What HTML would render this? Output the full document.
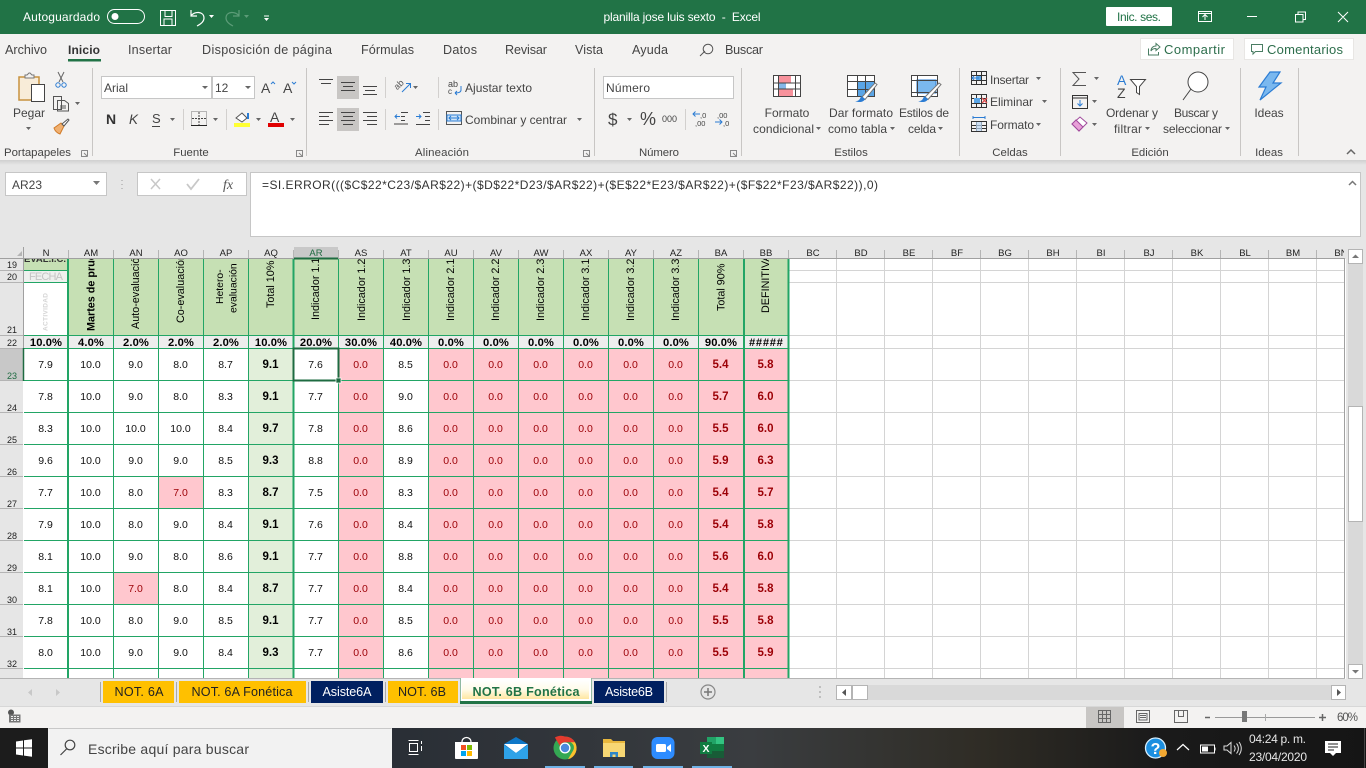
<!DOCTYPE html>
<html lang="es"><head><meta charset="utf-8"><title>planilla jose luis sexto - Excel</title>
<style>
html,body{margin:0;padding:0;width:1366px;height:768px;overflow:hidden;background:#e6e6e6}
svg{position:absolute;left:0;top:0;display:block}
svg text{font-family:"Liberation Sans",Arial,sans-serif;white-space:pre}
.l{font-size:11.4px;fill:#444}.m{text-anchor:middle}
.r{font-size:12px;fill:#444}.h{font-size:9.5px;fill:#222;text-anchor:middle}
.n{font-size:9px;fill:#222;text-anchor:middle}
.v{font-size:10.8px;fill:#000}
.p{font-size:11.2px;font-weight:bold;fill:#000;text-anchor:middle;letter-spacing:.1px}
.tb{font-size:12.6px;fill:#222;text-anchor:middle}
#w{position:absolute;left:23px;top:348px;width:765px;height:330px;overflow:hidden}
table{border-collapse:separate;border-spacing:0;table-layout:fixed;width:765px;font:10.5px "Liberation Sans",Arial,sans-serif;color:#111}
td{width:45px;height:32px;box-sizing:border-box;padding:1px 0 0;text-align:center;background:#fff}
tr.e td{height:10px;padding:0}
td:nth-child(n+8){background:#ffc7ce;color:#9c0006}
td:nth-child(9){background:#fff;color:#111}
td:nth-child(6){background:#e2efda;font-weight:bold;font-size:11.5px;color:#000}
td:nth-child(n+16){font-weight:bold;font-size:11.5px}
td.q{background:#ffc7ce;color:#9c0006}
</style></head><body>
<svg width="1366" height="768" viewBox="0 0 1366 768" fill="none">
<defs>
<linearGradient id="sh" x1="0" y1="0" x2="0" y2="1"><stop offset="0" stop-color="#cfcfcf"/><stop offset="1" stop-color="#e6e6e6"/></linearGradient>
<linearGradient id="tk" x1="0" y1="0" x2="1" y2="0"><stop offset="0" stop-color="#20252b"/><stop offset=".3" stop-color="#2a2f36"/><stop offset=".55" stop-color="#3a3d40"/><stop offset=".72" stop-color="#2f2c25"/><stop offset=".85" stop-color="#1a1a1a"/><stop offset="1" stop-color="#151515"/></linearGradient>
<linearGradient id="at" x1="0" y1="0" x2="0" y2="1"><stop offset="0" stop-color="#fff"/><stop offset=".5" stop-color="#fffbe9"/><stop offset="1" stop-color="#ffe6a0"/></linearGradient>
</defs>
<!-- base areas -->
<rect width="1366" height="34" fill="#217346"/>
<rect y="34" width="1366" height="126" fill="#f3f2f1"/>
<rect y="160" width="1366" height="5" fill="url(#sh)"/>
<rect y="165" width="1366" height="82" fill="#e6e6e6"/>
<!-- title bar -->
<text x="23" y="21" font-size="12" fill="#fff" textLength="77">Autoguardado</text>
<rect x="107.5" y="9.5" width="37" height="14" rx="7" stroke="#fff"/><circle cx="115" cy="16.5" r="3.5" fill="#fff"/>
<path d="M160.5 10.500h15v15h-15zM165 10.500v6h7v-6M164 25.500v-6.500h8v6.500" stroke="#fff"/>
<path d="M191 10v6h6M191 16c3-5 13-5 13 2 0 3-3 6-7 8" stroke="#fff" stroke-width="1.200"/>
<path d="M209 15h5l-2.500 3zM264 15.500h5v1h-5zM264 18h5l-2.500 3z" fill="#fff"/>
<path d="M239 10v6h-6M239 16c-3-5-13-5-13 2 0 3 3 6 7 8" stroke="#5c9c78" stroke-width="1.200"/><path d="M244 15h5l-2.500 3z" fill="#5c9c78"/>
<text x="682" y="21" class="m" font-size="12" fill="#fff" textLength="157">planilla jose luis sexto  -  Excel</text>
<rect x="1106" y="7" width="66" height="19" fill="#fff" rx="1"/><text x="1139" y="21" class="m" font-size="12" fill="#217346" textLength="44">Inic. ses.</text>
<path d="M1198.500 11.500h13v10h-13zM1198.500 13.500h13M1205 20v-5M1202.500 17l2.500-2.500 2.500 2.500" stroke="#fff"/>
<path d="M1247 16.500h10M1295.500 14.500h7.500v7.500h-7.500zM1298 14.500v-2.500h7.500v7.500h-2.500M1338 12l10 10M1348 12l-10 10" stroke="#fff"/>
<!-- tabs -->
<g font-size="12.6" fill="#444">
<text x="5" y="54" textLength="42">Archivo</text>
<text x="68" y="54" textLength="32" font-weight="bold" fill="#333" font-size="12">Inicio</text>
<text x="128" y="54" textLength="44">Insertar</text>
<text x="202" y="54" textLength="130">Disposición de página</text>
<text x="361" y="54" textLength="53">Fórmulas</text>
<text x="443" y="54" textLength="34">Datos</text>
<text x="505" y="54" textLength="42">Revisar</text>
<text x="575" y="54" textLength="28">Vista</text>
<text x="632" y="54" textLength="36">Ayuda</text>
<text x="725" y="54" textLength="38">Buscar</text>
</g>
<rect x="68" y="59" width="33" height="2.500" fill="#217346"/>
<path d="M700 56l5-5" stroke="#555"/><circle cx="708" cy="49" r="4.800" stroke="#555"/>
<rect x="1140.500" y="38.500" width="93" height="21" fill="#fff" stroke="#e8e6e4"/>
<rect x="1244.500" y="38.500" width="109" height="21" fill="#fff" stroke="#e8e6e4"/>
<path d="M1148.500 48.500v6.500h10v-3M1151 51c0-3 2-5 5-5v-2.500l4 3.500-4 3.500v-2c-2 0-4 .5-5 2.500z" stroke="#4a7d63"/>
<path d="M1251.500 44.500h11v7h-7l-2.500 2.500v-2.500h-1.500z" stroke="#4a7d63"/>
<text x="1164" y="54" font-size="13" fill="#2d6e4c" textLength="61">Compartir</text>
<text x="1267" y="54" font-size="13" fill="#2d6e4c" textLength="76">Comentarios</text>
<!-- group separators -->
<path d="M92.500 68v88M306.500 68v88M594.500 68v88M741.500 68v88M959.500 68v88M1060.500 68v88M1240.500 68v88M1298.500 68v88" stroke="#c8c6c4"/>
<path d="M183.500 109v21M226.500 109v21M385.500 77v21M385.500 109v21M438.500 77v21M438.500 109v21M685.500 109v21" stroke="#d2d0ce"/>
<!-- labels -->
<text x="4" y="156" class="l" textLength="67">Portapapeles</text>
<text x="191" y="156" class="l m">Fuente</text>
<text x="415" y="156" class="l" textLength="54">Alineación</text>
<text x="639" y="156" class="l" textLength="40">Número</text>
<text x="851" y="156" class="l m">Estilos</text>
<text x="1010" y="156" class="l m">Celdas</text>
<text x="1150" y="156" class="l m">Edición</text>
<text x="1269" y="156" class="l m">Ideas</text>
<g stroke="#888"><path d="M81.500 150.500h6v6M81.500 150.500v6h6M84 153l3 3M296.500 150.500h6v6h-6zM299 153l3 3M583.500 150.500h6v6h-6zM586 153l3 3M730.500 150.500h6v6h-6zM733 153l3 3"/></g>
<path d="M1347 154l4-4 4 4" stroke="#666" stroke-width="1.500"/>
<!-- clipboard -->
<path d="M19 77h20v23H19z" fill="#f8ecd8" stroke="#c8923f" stroke-width="1.500"/>
<path d="M25 77v-2h2l2-2h1l2 2h2v3h-9z" fill="#f3f2f1" stroke="#777"/>
<rect x="31.500" y="84.500" width="13" height="17" fill="#fff" stroke="#444"/>
<text x="29" y="117" class="r m" font-size="12">Pegar</text>
<path d="M26 127h5l-2.500 3zM75 102h5l-2.500 3z" fill="#666"/>
<path d="M58 72l5 10M64 72l-5 10" stroke="#666"/><circle cx="58" cy="85" r="2.200" stroke="#2b7cd3"/><circle cx="64" cy="85" r="2.200" stroke="#2b7cd3"/>
<path d="M53.500 96.500h8v13h-8zM57.500 100.500h7l4 3v7.500h-11z" stroke="#555" fill="#f3f2f1"/><path d="M60 106h6M60 108h6" stroke="#555"/>
<path d="M54 128l7-5 3 3-4 8c-3-1-5-3-6-6z" fill="#f0b070" stroke="#d07a28"/><path d="M62 124l6-5 1 1-5 6z" fill="#fff" stroke="#555"/>
<!-- font controls -->
<rect x="101.500" y="76.500" width="110" height="22" fill="#fff" stroke="#c6c6c6"/>
<rect x="212.500" y="76.500" width="42" height="22" fill="#fff" stroke="#c6c6c6"/>
<text x="104" y="92" class="r">Arial</text><text x="215" y="92" class="r">12</text>
<path d="M202 86h6l-3 3zM245 86h6l-3 3zM723 86h6l-3 3z" fill="#666"/>
<text x="261" y="93" font-size="14" fill="#444">A</text><text x="283" y="93" font-size="14" fill="#444">A</text>
<path d="M271 84l2-2 2 2" stroke="#2b7cd3"/><path d="M292 82l2 2 2-2" stroke="#2b7cd3"/>
<text x="106" y="124" font-size="14" font-weight="bold" fill="#333">N</text>
<text x="129" y="124" font-size="13.500" font-style="italic" fill="#444">K</text>
<text x="152" y="123" font-size="13" fill="#444">S</text><path d="M152 126.500h8" stroke="#444"/>
<path d="M170 118h5l-2.500 3zM213 118h5l-2.500 3zM256 118h5l-2.500 3zM290 118h5l-2.500 3zM413 86h5l-2.500 3zM577 118h5l-2.500 3z" fill="#666"/>
<path d="M191.500 111.500h15v14h-15z" stroke="#777" stroke-dasharray="1 1"/><path d="M199 112v13M192 118.500h14" stroke="#444" stroke-dasharray="2 1"/><path d="M191 125.500h16" stroke="#222"/>
<path d="M236 118l6-5 5 5-5 4z" fill="#fff" stroke="#555"/><path d="M248 113v6" stroke="#2b7cd3" stroke-width="2"/>
<rect x="234" y="123" width="16" height="4" fill="#ffff33"/>
<text x="270" y="122" font-size="14" fill="#444">A</text><rect x="268" y="123" width="16" height="4" fill="#e00000"/>
<!-- alignment -->
<rect x="337" y="76" width="22" height="23" fill="#c8c6c4"/><rect x="337" y="108" width="22" height="23" fill="#c8c6c4"/>
<path d="M319 79.500h14M321 83.500h10M363 86.500h14M365 90.500h10M363 94.500h14M341 82.500h14M343 86.500h10M341 90.500h14" stroke="#444"/>
<path d="M319 112.500h14M319 116.500h10M319 120.500h14M319 124.500h10M341 112.500h14M343 116.500h10M341 120.500h14M343 124.500h10M363 112.500h14M367 116.500h10M363 120.500h14M367 124.500h10" stroke="#444"/>
<text x="393" y="88" font-size="9" fill="#555" transform="rotate(-45 398 84)">ab</text>
<path d="M402 92l8-8M406 83.500h4.500v4.500" stroke="#2b7cd3"/>
<path d="M401 113.500h7M401 117.500h4M401 121.500h4M394 125h14" stroke="#444" transform="translate(0 -1)"/><path d="M395 116.500h5M397 114.500l-2 2 2 2" stroke="#2b7cd3"/>
<path d="M423 112.500h7M425 116.500h5M425 120.500h5M416 124.500h14" stroke="#444"/><path d="M416 116.500h5M419 114.500l2 2-2 2" stroke="#2b7cd3"/>
<text x="448" y="87" font-size="9" fill="#444">ab</text><text x="448" y="94" font-size="8" fill="#444">c</text>
<path d="M461 86v4c0 3-5 3-6 3M455 93l2-2M455 93l2 2" stroke="#2b7cd3"/>
<text x="465" y="92" class="r" textLength="67">Ajustar texto</text>
<rect x="446.500" y="111.500" width="15" height="13" fill="#f3f2f1" stroke="#555"/><rect x="447" y="115" width="14" height="6" fill="#cfe5f8" stroke="#2b7cd3"/><path d="M449 118h10M451 116l-2 2 2 2M457 116l2 2-2 2" stroke="#2b7cd3"/>
<text x="465" y="124" class="r" textLength="102">Combinar y centrar</text>
<!-- number -->
<rect x="603.500" y="76.500" width="130" height="22" fill="#fff" stroke="#c6c6c6"/>
<text x="606" y="92" class="r" textLength="44">Número</text>
<text x="608" y="125" font-size="17" fill="#444">$</text><path d="M627 118h5l-2.500 3z" fill="#666"/>
<text x="640" y="125" font-size="18" fill="#444">%</text>
<text x="662" y="122" font-size="9" fill="#444">000</text>
<path d="M693 114h7M695.500 111.500l-2.500 2.500 2.500 2.500" stroke="#2b7cd3"/><text x="700" y="118" font-size="7.500" fill="#444">,0</text><text x="695" y="126" font-size="7.500" fill="#444">,00</text>
<path d="M715 122h7M719.500 119.500l2.500 2.500-2.500 2.500" stroke="#2b7cd3"/><text x="717" y="118" font-size="7.500" fill="#444">,00</text><text x="723" y="126" font-size="7.500" fill="#444">,0</text>
<!-- estilos -->
<rect x="773" y="75" width="28" height="22" fill="#fff"/>
<rect x="778" y="75" width="13" height="8" fill="#f7929c"/><rect x="778" y="83" width="8" height="6" fill="#85b7e8"/><rect x="778" y="89" width="15" height="8" fill="#f7929c"/>
<path d="M773.500 75.500h27v21h-27zM773.500 83h27M773.500 89h27M778.500 75.500v21M795.500 75.500v21" stroke="#444"/>
<rect x="847" y="75" width="28" height="22" fill="#fff"/>
<rect x="857" y="81" width="18" height="16" fill="#5aa5e6"/>
<path d="M847.500 75.500h27v21h-27zM847.500 81.500h27M847.500 89.500h27M857.500 75.500v21M865.500 75.500v21" stroke="#444"/>
<rect x="911" y="75" width="27" height="22" fill="#fff"/>
<rect x="917" y="80" width="19" height="13" fill="#7ab8ef" stroke="#2b7cd3"/>
<path d="M911.500 75.500h26v21h-26zM911.500 80.500h26M911.500 92.500h26M917.500 75.500v21" stroke="#444"/>
<path d="M862 97l13-14 2 1.500-12 15z" fill="#fff" stroke="#777"/><path d="M855 101c3 .5 5-1 6-5l4 3c-1 3-6 4-10 2z" fill="#2b7cd3"/>
<path d="M925 97l14-14 2 1.500-13 15z" fill="#fff" stroke="#777"/><path d="M918 101c3 .5 5-1 6-5l4 3c-1 3-6 4-10 2z" fill="#2b7cd3"/>
<text x="787" y="117" class="r m">Formato</text><text x="753" y="133" class="r" textLength="61">condicional</text>
<text x="861" y="117" class="r m" textLength="64">Dar formato</text><text x="828" y="133" class="r" textLength="59">como tabla</text>
<text x="924" y="117" class="r m" textLength="50">Estilos de</text><text x="908" y="133" class="r" textLength="28">celda</text>
<text x="1132" y="117" class="r m" textLength="52">Ordenar y</text><text x="1114" y="133" class="r" textLength="28">filtrar</text>
<text x="1196" y="117" class="r m" textLength="44">Buscar y</text><text x="1163" y="133" class="r" textLength="59">seleccionar</text>
<text x="1269" y="117" class="r m">Ideas</text>
<text x="990" y="84" class="r" textLength="39">Insertar</text>
<text x="990" y="106" class="r" textLength="43">Eliminar</text>
<text x="990" y="129" class="r" textLength="44">Formato</text>
<path d="M816 127h5l-2.500 3zM890 127h5l-2.500 3zM938 127h5l-2.500 3zM1036 77h5l-2.500 3zM1042 100h5l-2.500 3zM1036 123h5l-2.500 3zM1094 77h5l-2.500 3zM1092 100h5l-2.500 3zM1092 123h5l-2.500 3zM1145 127h5l-2.500 3zM1225 127h5l-2.500 3z" fill="#666"/>
<!-- celdas -->
<path d="M971.500 71.500h15v13h-15zM971.500 75.500h15M971.500 80.500h15M981.500 71.500v13M976.500 71.500v13" stroke="#333"/><rect x="976" y="76" width="5" height="4" fill="#5aa5e6"/><path d="M972 78h7M974 76l-2 2 2 2" stroke="#2b7cd3" fill="none"/>
<path d="M971.500 94.500h15v13h-15zM971.500 98.500h15M971.500 103.500h15M976.500 94.500v13M981.500 94.500v13" stroke="#333"/><rect x="974" y="98" width="6" height="5" fill="#5aa5e6"/><path d="M982 98l5 5M987 98l-5 5" stroke="#e05050" stroke-width="1.300"/>
<path d="M971.500 121.500h15v10h-15zM971.500 125.500h15M971.500 128.500h15M976.500 121.500v10M981.500 121.500v10" stroke="#333"/><rect x="976" y="122" width="6" height="9" fill="#bcd9f5" opacity=".7"/><path d="M973 117.500h12M973 116v3M985 116v3" stroke="#2b7cd3"/>
<!-- edicion -->
<path d="M1086 72.500h-13l6 6.500-6 6.500h13" stroke="#555"/>
<path d="M1072.500 95.500h15v13h-15zM1072.500 98h15" stroke="#333"/><path d="M1080 100v6M1077.500 103.500l2.500 2.500 2.500-2.500" stroke="#2b7cd3"/>
<path d="M1072 124l8-7 7 6-8 8z" fill="#fff" stroke="#a04a9c"/><path d="M1072 124l4-4 7 7-4 4z" fill="#e8a0d8" stroke="#a04a9c"/>
<text x="1117" y="85" font-size="14" fill="#2b7cd3">A</text><text x="1117" y="98" font-size="14" fill="#444">Z</text>
<path d="M1130.500 79.500h15l-6 7v8l-3-2v-6z" stroke="#444" fill="#fff"/>
<circle cx="1198" cy="82" r="10" fill="#fff" stroke="#444"/><path d="M1191 89l-8 11" stroke="#444"/>
<path d="M1270 72l-11 15h7l-6 13 21-17h-8l7-11z" fill="#7ab8ef" stroke="#2b7cd3" stroke-width="1.200"/>
<!-- formula bar -->
<rect x="5.500" y="172.500" width="101" height="23" fill="#fff" stroke="#c6c6c6"/>
<text x="12" y="189" font-size="12" fill="#444">AR23</text><path d="M93 181h7l-3.500 4z" fill="#777"/>
<path d="M122 180v1M122 184v1M122 188v1" stroke="#999"/>
<rect x="137.500" y="172.500" width="109" height="23" fill="#fff" stroke="#c6c6c6"/>
<path d="M151 179l9 10M160 179l-9 10" stroke="#c8c8c8" stroke-width="1.500"/>
<path d="M187 184l4 5 8-10" stroke="#c8c8c8" stroke-width="1.800"/>
<text x="223" y="189" font-size="14" font-style="italic" fill="#555" style="font-family:'Liberation Serif',serif">fx</text>
<rect x="250.500" y="172.500" width="1110" height="64" fill="#fff" stroke="#c6c6c6"/>
<text x="262" y="189" font-size="12" fill="#333" textLength="616">=SI.ERROR((($C$22*C23/$AR$22)+($D$22*D23/$AR$22)+($E$22*E23/$AR$22)+($F$22*F23/$AR$22)),0)</text>
<path d="M1349 185l3.500-3.500 3.500 3.500" stroke="#777" stroke-width="1.500"/>
<!-- sheet background -->
<rect y="259" width="1346" height="420" fill="#fff"/>
<rect x="0" y="247" width="1346" height="11" fill="#e6e6e6"/>
<rect x="0" y="258" width="23" height="421" fill="#e6e6e6"/>
<rect x="294" y="247" width="44" height="11" fill="#c8c8c8"/>
<rect x="0" y="348" width="23" height="32" fill="#c8c8c8"/>
<!-- header & grid, right part -->
<path d="M1344 258.500H0M1344.500 258v421M23.500 247v431" stroke="#a0a0a0"/>
<g stroke="#d4d4d4">
<path d="M789 270.500h555M789 282.500h555M789 335.500h555M789 348.500h555M789 380.500h555M789 412.500h555M789 444.500h555M789 476.500h555M789 508.500h555M789 540.500h555M789 572.500h555M789 604.500h555M789 636.500h555M789 668.500h555"/>
<path d="M836.500 259v419M884.500 259v419M932.500 259v419M980.500 259v419M1028.500 259v419M1076.500 259v419M1124.500 259v419M1172.500 259v419M1220.500 259v419M1268.500 259v419M1316.500 259v419"/>
</g>
<path d="M68.500 250v8M113.500 250v8M158.500 250v8M203.500 250v8M248.500 250v8M293.500 250v8M338.500 250v8M383.500 250v8M428.500 250v8M473.500 250v8M518.500 250v8M563.500 250v8M608.500 250v8M653.500 250v8M698.500 250v8M743.500 250v8M788.500 250v8M836.500 250v8M884.500 250v8M932.500 250v8M980.500 250v8M1028.500 250v8M1076.500 250v8M1124.500 250v8M1172.500 250v8M1220.500 250v8M1268.500 250v8M1316.500 250v8" stroke="#b4b4b4"/>
<path d="M0 270.500h23M0 282.500h23M0 335.500h23M0 348.500h23M0 380.500h23M0 412.500h23M0 444.500h23M0 476.500h23M0 508.500h23M0 540.500h23M0 572.500h23M0 604.500h23M0 636.500h23M0 668.500h23M0 678.500h1345" stroke="#b4b4b4"/>
<path d="M17 256h5v-5z" fill="#b4b4b4"/>
<!-- col letters -->
<text x="46" y="256" class="h">N</text><text x="91" y="256" class="h">AM</text><text x="136" y="256" class="h">AN</text><text x="181" y="256" class="h">AO</text><text x="226" y="256" class="h">AP</text><text x="271" y="256" class="h">AQ</text><text x="316" y="256" class="h" style="fill:#1e6b41">AR</text><text x="361" y="256" class="h">AS</text><text x="406" y="256" class="h">AT</text><text x="451" y="256" class="h">AU</text><text x="496" y="256" class="h">AV</text><text x="541" y="256" class="h">AW</text><text x="586" y="256" class="h">AX</text><text x="631" y="256" class="h">AY</text><text x="676" y="256" class="h">AZ</text><text x="721" y="256" class="h">BA</text><text x="766" y="256" class="h">BB</text><text x="813" y="256" class="h">BC</text><text x="861" y="256" class="h">BD</text><text x="909" y="256" class="h">BE</text><text x="957" y="256" class="h">BF</text><text x="1005" y="256" class="h">BG</text><text x="1053" y="256" class="h">BH</text><text x="1101" y="256" class="h">BI</text><text x="1149" y="256" class="h">BJ</text><text x="1197" y="256" class="h">BK</text><text x="1245" y="256" class="h">BL</text><text x="1293" y="256" class="h">BM</text>
<svg x="1317" y="247" width="27" height="11"><text x="24" y="9" class="h">BN</text></svg>
<!-- row numbers -->
<text x="12" y="268" class="n">19</text><text x="12" y="280" class="n">20</text><text x="12" y="333" class="n">21</text><text x="12" y="346" class="n">22</text><text x="12" y="379" class="n" style="fill:#1e6b41">23</text><text x="12" y="411" class="n">24</text><text x="12" y="443" class="n">25</text><text x="12" y="475" class="n">26</text><text x="12" y="507" class="n">27</text><text x="12" y="539" class="n">28</text><text x="12" y="571" class="n">29</text><text x="12" y="603" class="n">30</text><text x="12" y="635" class="n">31</text><text x="12" y="667" class="n">32</text>
<!-- header cells -->
<rect x="24" y="259" width="44" height="11" fill="#c6e0b4"/>
<rect x="24" y="271" width="44" height="11" fill="#eef0ee"/>
<rect x="69" y="259" width="719" height="76" fill="#c6e0b4"/>
<rect x="24" y="336" width="764" height="12" fill="#ededed"/>
<!-- sheet tabs band -->
<rect y="679" width="1366" height="28" fill="#e6e6e6"/>
<rect y="706.500" width="1366" height="1" fill="#c8c8c8"/>
<rect y="707" width="1366" height="21" fill="#f3f2f1"/>
<path d="M32 689l-4 3.500 4 3.500zM56 689l4 3.500-4 3.500z" fill="#c8c8c8"/>
<path d="M100.500 682v20M176.500 682v20M308.500 682v20M385.500 682v20M666.500 682v20" stroke="#a8a8a8"/>
<rect x="103" y="681" width="71" height="22" fill="#ffc000"/>
<rect x="179" y="681" width="127" height="22" fill="#ffc000"/>
<rect x="311" y="681" width="72" height="22" fill="#002060"/>
<rect x="388" y="681" width="70" height="22" fill="#ffc000"/>
<rect x="460" y="678" width="132" height="26" fill="#217346"/><rect x="460.500" y="678" width="131" height="23" fill="#fff"/>
<rect x="462" y="680" width="127" height="19" fill="url(#at)"/>
<rect x="594" y="681" width="70" height="22" fill="#002060"/>
<text x="139" y="696" class="tb" textLength="49">NOT. 6A</text>
<text x="242" y="696" class="tb" textLength="101">NOT. 6A Fonética</text>
<text x="347" y="696" class="tb" style="fill:#fff" textLength="49">Asiste6A</text>
<text x="422" y="696" class="tb" textLength="48">NOT. 6B</text>
<text x="526" y="696" class="tb" style="fill:#217346;font-weight:bold" textLength="107">NOT. 6B Fonética</text>
<text x="629" y="696" class="tb" style="fill:#fff" textLength="48">Asiste6B</text>
<circle cx="708" cy="692" r="7" stroke="#888" stroke-width="1.200"/><path d="M704 692h8M708 688v8" stroke="#777" stroke-width="1.500"/>
<path d="M820 686v2M820 691v2M820 696v2" stroke="#aaa" stroke-width="1.300"/>
<rect x="852" y="685" width="493" height="15" fill="#d9d9d9"/>
<rect x="836.500" y="685.500" width="15" height="14" fill="#fff" stroke="#b4b4b4"/><path d="M846 689l-4 3.500 4 3.500z" fill="#555"/>
<rect x="852.500" y="685.500" width="15" height="14" fill="#fff" stroke="#b4b4b4"/>
<rect x="1331.500" y="685.500" width="14" height="14" fill="#fff" stroke="#b4b4b4"/><path d="M1337 689l4 3.500-4 3.500z" fill="#555"/>
<!-- vertical scrollbar -->
<rect x="1348" y="249" width="15" height="429" fill="#d9d9d9"/>
<rect x="1348.500" y="249.500" width="14" height="14" fill="#fff" stroke="#b4b4b4"/><path d="M1352 258l3.500-3.500 3.500 3.500z" fill="#777"/>
<rect x="1348.500" y="406.500" width="14" height="115" fill="#fff" stroke="#b4b4b4"/>
<rect x="1348.500" y="664.500" width="14" height="14" fill="#fff" stroke="#b4b4b4"/><path d="M1352 670l3.500 3.500 3.500-3.500z" fill="#777"/>
<!-- status bar -->
<circle cx="11" cy="712.500" r="3" fill="#555"/><path d="M9 714.500h11.500v8h-11.500z" fill="#777"/><path d="M11 716.500h8M11 718.500h8M11 720.500h8" stroke="#eee" stroke-dasharray="2 1"/>
<rect x="1086" y="707" width="38" height="21" fill="#c8c6c4"/>
<path d="M1098.500 710.500h12v12h-12zM1098.500 714.500h12M1098.500 718.500h12M1102.500 710.500v12M1106.500 710.500v12" stroke="#666"/>
<path d="M1136.500 710.500h13v12h-13zM1139 713.500h8v6.500h-8zM1140 715.500h6M1140 717.500h6" stroke="#666"/>
<path d="M1174.500 710.500h13v12h-13zM1178.500 710.500v6h5v-6" stroke="#666"/>
<path d="M1215 717.500h100" stroke="#999"/>
<path d="M1205 717.500h5M1319 717.500h7M1322.500 714v7" stroke="#666" stroke-width="1.500"/>
<path d="M1265.500 714v7" stroke="#aaa"/>
<rect x="1242" y="711" width="5" height="11" fill="#777"/>
<text x="1337" y="721" font-size="11.500" fill="#555" textLength="21">60%</text>
<!-- taskbar -->
<rect y="728" width="1366" height="40" fill="url(#tk)"/>
<rect y="728" width="48" height="40" fill="#1c1c1c"/>
<rect x="48" y="728" width="344" height="40" fill="#f2f2f2"/>
<path d="M48.500 728.500h343" stroke="#c8c8c8"/>
<path d="M16 741.500l7-1v7h-7zM24 740.300l8-1v8.200h-8zM16 748.500h7v7l-7-1zM24 748.500h8v8.300l-8-1.200z" fill="#fff"/>
<circle cx="70" cy="745" r="4.800" stroke="#444" stroke-width="1.200"/><path d="M66.500 749l-6 6" stroke="#444" stroke-width="1.200"/>
<text x="88" y="754" font-size="14" fill="#444" textLength="161">Escribe aquí para buscar</text>
<path d="M409.500 743.500h8v8h-8zM408.500 740.500h10M408.500 754.500h10M421.500 741v3M421.500 746v5" stroke="#fff"/>
<!-- store -->
<path d="M455 742h23v16c0 1-1 1-1 1h-21c-1 0-1-1-1-1z" fill="#fff"/><path d="M462 742c0-6 9-6 9 0" stroke="#fff" stroke-width="1.200"/>
<rect x="461" y="745" width="5" height="5" fill="#f25022"/><rect x="467" y="745" width="5" height="5" fill="#7fba00"/><rect x="461" y="751" width="5" height="5" fill="#00a4ef"/><rect x="467" y="751" width="5" height="5" fill="#ffb900"/>
<!-- mail -->
<path d="M504 744l12-7 12 7v15h-24z" fill="#0f78c8"/><path d="M504 744h24l-12 9z" fill="#fff"/><path d="M504 745l12 8 12-8v14h-24z" fill="#2ea2e8"/>
<!-- chrome -->
<circle cx="565" cy="748" r="11.500" fill="#34a853"/>
<path d="M565 736.500a11.500 11.500 0 0 1 10 5.800h-10a5.700 5.700 0 0 0-5.200 3.400l-4.900-8.200a11.500 11.500 0 0 1 10.100-1z" fill="#e33b2e"/>
<path d="M575 742.300a11.500 11.500 0 0 1-7 17l5-8.600a5.700 5.700 0 0 0-2.500-8.400z" fill="#fbc02d"/>
<circle cx="565" cy="748" r="5.500" fill="#fff"/><circle cx="565" cy="748" r="4.200" fill="#4a89dc"/>
<!-- folder -->
<path d="M603 739h8l2 2h12v16h-22z" fill="#e8b73d"/><path d="M603 743h22v14h-22z" fill="#f7d774"/><path d="M610 757v-5h8v5h-2.500v-2.500h-3v2.500z" fill="#2f86c6"/>
<!-- zoom -->
<rect x="651.500" y="737" width="23" height="22" rx="6" fill="#2d8cff"/><rect x="656" y="744" width="10" height="8" rx="1.500" fill="#fff"/><path d="M667 747l4-3v8l-4-3z" fill="#fff"/>
<!-- excel -->
<rect x="707" y="737" width="17" height="21" fill="#21a366"/><rect x="716" y="737" width="8" height="7" fill="#33c481"/><rect x="707" y="744" width="17" height="7" fill="#107c41"/><rect x="707" y="751" width="17" height="7" fill="#185c37"/>
<rect x="700" y="742" width="12" height="12" fill="#107c41"/>
<text x="702.500" y="752" font-size="10.500" font-weight="bold" fill="#fff">X</text>
<path d="M545 767h40M594 767h39M643 767h40M692 767h40" stroke="#6fb2e6" stroke-width="2"/>
<!-- tray -->
<circle cx="1155.500" cy="748" r="10" fill="#1b8fe0" stroke="#d8f0ff" stroke-width="1.300"/>
<text x="1155.500" y="754" class="m" font-size="16" font-weight="bold" fill="#fff">?</text>
<circle cx="1163" cy="753" r="4" fill="#f2a832"/>
<path d="M1177 750l6-5.500 6 5.500" stroke="#fff" stroke-width="1.200"/>
<path d="M1200.500 745h14v8h-14zM1215 747.500v3" stroke="#fff"/><rect x="1202" y="746.500" width="6" height="5" fill="#fff"/>
<path d="M1224 746h3l4-3.500v11l-4-3.500h-3zM1234 745.500c1.500 2 1.500 4 0 6M1236.500 743.500c2.500 3 2.500 7 0 10M1239 742c3 4 3 9 0 13" stroke="#ddd"/>
<text x="1249" y="743" font-size="12" fill="#e6e6e6" textLength="57">04:24 p. m.</text>
<text x="1249" y="761" font-size="12" fill="#e6e6e6" textLength="58">23/04/2020</text>
<path d="M1325 741h16v12h-5l-3 3-3-3h-5z" fill="#fff"/><path d="M1328 744h10M1328 747h10M1328 750h6" stroke="#222"/>
<path d="M1364.500 728v40" stroke="#444"/>
</svg>
<div id="w"><table>
<tr><td>7.9<td>10.0<td>9.0<td>8.0<td>8.7<td>9.1<td>7.6<td>0.0<td>8.5<td>0.0<td>0.0<td>0.0<td>0.0<td>0.0<td>0.0<td>5.4<td>5.8
<tr><td>7.8<td>10.0<td>9.0<td>8.0<td>8.3<td>9.1<td>7.7<td>0.0<td>9.0<td>0.0<td>0.0<td>0.0<td>0.0<td>0.0<td>0.0<td>5.7<td>6.0
<tr><td>8.3<td>10.0<td>10.0<td>10.0<td>8.4<td>9.7<td>7.8<td>0.0<td>8.6<td>0.0<td>0.0<td>0.0<td>0.0<td>0.0<td>0.0<td>5.5<td>6.0
<tr><td>9.6<td>10.0<td>9.0<td>9.0<td>8.5<td>9.3<td>8.8<td>0.0<td>8.9<td>0.0<td>0.0<td>0.0<td>0.0<td>0.0<td>0.0<td>5.9<td>6.3
<tr><td>7.7<td>10.0<td>8.0<td class="q">7.0<td>8.3<td>8.7<td>7.5<td>0.0<td>8.3<td>0.0<td>0.0<td>0.0<td>0.0<td>0.0<td>0.0<td>5.4<td>5.7
<tr><td>7.9<td>10.0<td>8.0<td>9.0<td>8.4<td>9.1<td>7.6<td>0.0<td>8.4<td>0.0<td>0.0<td>0.0<td>0.0<td>0.0<td>0.0<td>5.4<td>5.8
<tr><td>8.1<td>10.0<td>9.0<td>8.0<td>8.6<td>9.1<td>7.7<td>0.0<td>8.8<td>0.0<td>0.0<td>0.0<td>0.0<td>0.0<td>0.0<td>5.6<td>6.0
<tr><td>8.1<td>10.0<td class="q">7.0<td>8.0<td>8.4<td>8.7<td>7.7<td>0.0<td>8.4<td>0.0<td>0.0<td>0.0<td>0.0<td>0.0<td>0.0<td>5.4<td>5.8
<tr><td>7.8<td>10.0<td>8.0<td>9.0<td>8.5<td>9.1<td>7.7<td>0.0<td>8.5<td>0.0<td>0.0<td>0.0<td>0.0<td>0.0<td>0.0<td>5.5<td>5.8
<tr><td>8.0<td>10.0<td>9.0<td>9.0<td>8.4<td>9.3<td>7.7<td>0.0<td>8.6<td>0.0<td>0.0<td>0.0<td>0.0<td>0.0<td>0.0<td>5.5<td>5.9
<tr class="e"><td><td><td><td><td><td><td><td><td><td><td><td><td><td><td><td><td>
</table></div>
<svg width="1366" height="768" viewBox="0 0 1366 768" fill="none" style="pointer-events:none">
<defs><clipPath id="c"><rect x="0" y="259" width="800" height="80"/></clipPath></defs>
<!-- vertical header text -->
<g clip-path="url(#c)">
<text x="45" y="262" class="m" font-size="9.500" font-weight="bold" fill="#333">EVAL.I.C.</text>
<text x="46" y="280" class="m" font-size="11" fill="#c4c4c4" textLength="34">FECHA</text>
<text transform="translate(47.500 331) rotate(-90)" font-size="6.500" font-weight="bold" fill="#d4d4d4" textLength="38">ACTIVIDAD</text>
<text transform="translate(94.500 331) rotate(-90)" class="v" font-weight="bold">Martes de prueba</text>
<text transform="translate(139 329) rotate(-90)" class="v">Auto-evaluación</text>
<text transform="translate(184 323) rotate(-90)" class="v">Co-evaluación</text>
<text transform="translate(223 304) rotate(-90)" class="v" style="font-size:10.400px">Hetero-</text>
<text transform="translate(236.500 313) rotate(-90)" class="v" style="font-size:10.400px">evaluación</text>
<text transform="translate(274 308) rotate(-90)" class="v">Total 10%</text>
<text transform="translate(319 320) rotate(-90)" class="v">Indicador 1.1</text>
<text transform="translate(365 321) rotate(-90)" class="v">Indicador 1.2</text>
<text transform="translate(410 321) rotate(-90)" class="v">Indicador 1.3</text>
<text transform="translate(454 321) rotate(-90)" class="v">Indicador 2.1</text>
<text transform="translate(499 321) rotate(-90)" class="v">Indicador 2.2</text>
<text transform="translate(544 321) rotate(-90)" class="v">Indicador 2.3</text>
<text transform="translate(589 321) rotate(-90)" class="v">Indicador 3.1</text>
<text transform="translate(634 321) rotate(-90)" class="v">Indicador 3.2</text>
<text transform="translate(679 321) rotate(-90)" class="v">Indicador 3.3</text>
<text transform="translate(724.500 311) rotate(-90)" class="v">Total 90%</text>
<text transform="translate(769 313) rotate(-90)" class="v">DEFINITIVA</text>
</g>
<!-- row 22 -->
<text x="46" y="346" class="p">10.0%</text><text x="91" y="346" class="p">4.0%</text><text x="136" y="346" class="p">2.0%</text><text x="181" y="346" class="p">2.0%</text><text x="226" y="346" class="p">2.0%</text><text x="271" y="346" class="p">10.0%</text><text x="316" y="346" class="p">20.0%</text><text x="361" y="346" class="p">30.0%</text><text x="406" y="346" class="p">40.0%</text><text x="451" y="346" class="p">0.0%</text><text x="496" y="346" class="p">0.0%</text><text x="541" y="346" class="p">0.0%</text><text x="586" y="346" class="p">0.0%</text><text x="631" y="346" class="p">0.0%</text><text x="676" y="346" class="p">0.0%</text><text x="721" y="346" class="p">90.0%</text><text x="766" y="346" class="p" textLength="34">#####</text>
<!-- green gridlines -->
<g stroke="#22a565">
<path d="M24 335.500h765M24 348.500h765M24 380.500h765M24 412.500h765M24 444.500h765M24 476.500h765M24 508.500h765M24 540.500h765M24 572.500h765M24 604.500h765M24 636.500h765M24 668.500h765"/>
<path d="M113.500 259v419M158.500 259v419M203.500 259v419M248.500 259v419M338.500 259v419M383.500 259v419M428.500 259v419M473.500 259v419M518.500 259v419M563.500 259v419M608.500 259v419M653.500 259v419M698.500 259v419"/>
<path d="M68 259v419M293.500 259v419M744 259v419M788.500 259v419" stroke-width="2"/>
<path d="M24 270.500h44M24 282.500h44"/>
</g>
<path d="M23.500 348v33" stroke="#1e6b41" stroke-width="1.500"/>
<rect x="293.500" y="348.500" width="45" height="32" stroke="#1e6b41" stroke-width="2"/>
<rect x="336" y="378" width="5" height="5" fill="#1e6b41" stroke="#fff" stroke-width=".7"/>
<path d="M294 258.500h44" stroke="#1e6b41" stroke-width="2"/>
</svg>
</body></html>
